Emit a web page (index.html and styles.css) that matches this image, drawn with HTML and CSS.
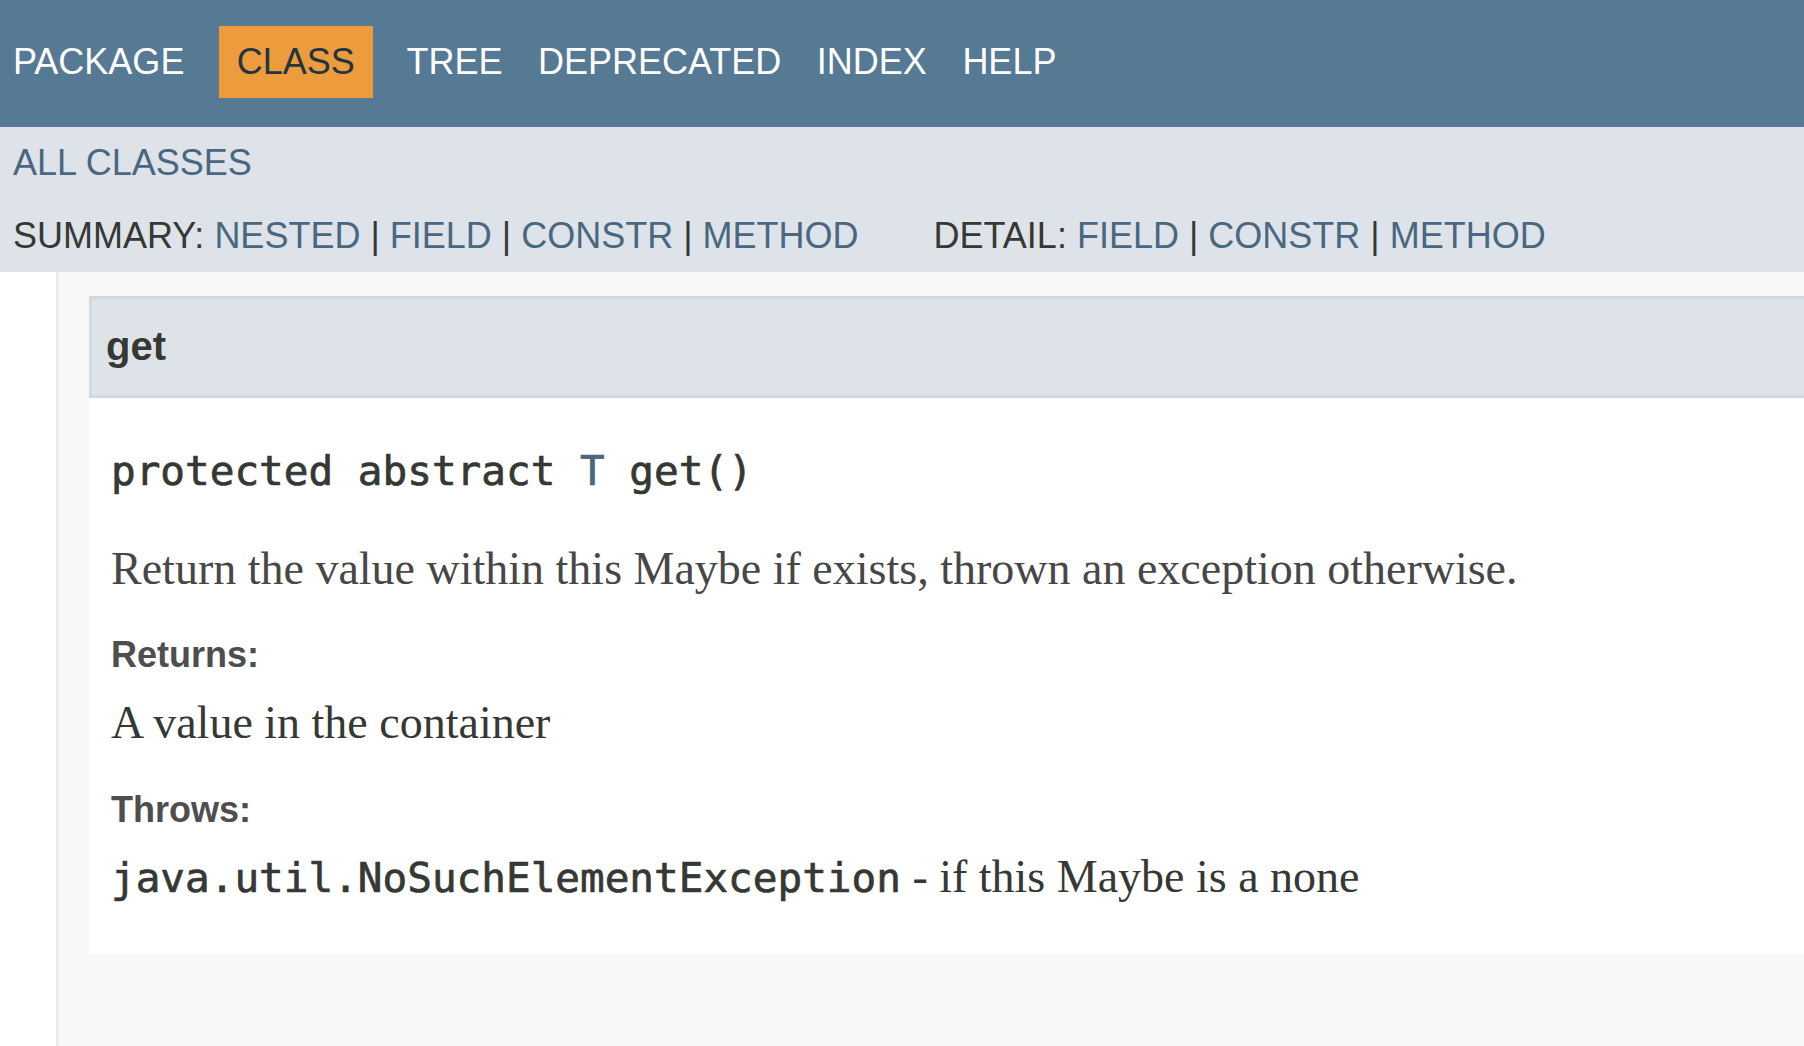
FILE: index.html
```html
<!DOCTYPE html>
<html lang="en">
<head>
<meta charset="utf-8">
<title>Maybe.get</title>
<link rel="stylesheet" href="styles.css">
</head>
<body>
<header class="topnav">
  <ul class="navlist">
    <li class="nav-item">PACKAGE</li>
    <li class="nav-item nav-active">CLASS</li>
    <li class="nav-item">TREE</li>
    <li class="nav-item">DEPRECATED</li>
    <li class="nav-item">INDEX</li>
    <li class="nav-item">HELP</li>
  </ul>
</header>
<nav class="subnav">
  <div class="subnav-row1"><a class="link" href="#">ALL CLASSES</a></div>
  <div class="subnav-row2">
    <div class="sublist">SUMMARY: <a class="link" href="#">NESTED</a> | <a class="link" href="#">FIELD</a> | <a class="link" href="#">CONSTR</a> | <a class="link" href="#">METHOD</a></div>
    <div class="sublist sublist-detail">DETAIL: <a class="link" href="#">FIELD</a> | <a class="link" href="#">CONSTR</a> | <a class="link" href="#">METHOD</a></div>
  </div>
</nav>
<main class="content">
  <section class="member">
    <h4 class="member-title">get</h4>
    <div class="member-body">
      <pre class="signature">protected abstract <a class="link" href="#">T</a> get()</pre>
      <div class="block">Return the value within this Maybe if exists, thrown an exception otherwise.</div>
      <dl class="notes">
        <dt class="note-label">Returns:</dt>
        <dd class="note-value">A value in the container</dd>
        <dt class="note-label note-label-gap">Throws:</dt>
        <dd class="note-value"><code class="code">java.util.NoSuchElementException</code> - if this Maybe is a none</dd>
      </dl>
    </div>
  </section>
</main>
</body>
</html>
```

FILE: styles.css
```css
html, body {
  margin: 0;
  padding: 0;
}

body {
  background: #ffffff;
  min-height: 100vh;
  display: flex;
  flex-direction: column;
  font-family: "Liberation Sans", Arial, sans-serif;
  color: #353833;
  overflow: hidden;
}

.link {
  color: #4a6782;
  text-decoration: none;
}

/* top navigation */
.topnav {
  background: #567994;
  padding: 26px 0 29px 13px;
}

.navlist {
  list-style: none;
  margin: 0;
  padding: 0;
  display: flex;
}

.nav-item {
  font-size: 36px;
  line-height: 72px;
  color: #ffffff;
  padding: 0 17.75px;
  white-space: nowrap;
}

.nav-item:first-child {
  padding-left: 0;
}

.nav-active {
  background: #ec9c3d;
  color: #253441;
  padding: 0 18px;
  margin: 0 16px 0 16.5px;
}

/* sub navigation */
.subnav {
  background: #dee3e9;
  padding: 6px 0 6px 13px;
  font-size: 36px;
}

.subnav-row1 {
  line-height: 60px;
}

.subnav-row2 {
  line-height: 60px;
  margin-top: 13px;
  display: flex;
  white-space: nowrap;
}

.sublist {
  color: #353833;
}

.sublist-detail {
  margin-left: 75px;
}

/* content */
.content {
  flex: 1;
  margin-left: 56px;
  border-left: 3px solid #ededed;
  background: #f8f8f8;
  padding: 24px 0 0 30px;
}

.member {
  background: #ffffff;
}

.member-title {
  margin: 0;
  background: #dee3e9;
  border: 3px solid #d0d9e0;
  border-right: none;
  padding: 0 0 2px 14px;
  font-size: 40px;
  line-height: 94px;
  font-weight: bold;
  color: #353833;
}

.member-body {
  padding: 49px 0 51px 22px;
}

.signature {
  margin: 0;
  font-family: "DejaVu Sans Mono", monospace;
  font-size: 41px;
  line-height: 48px;
  color: #353833;
  -webkit-text-stroke: 0.7px currentColor;
}

.block {
  margin-top: 48px;
  font-family: "Liberation Serif", "Times New Roman", serif;
  font-size: 46px;
  line-height: 52px;
  color: #474747;
}

.notes {
  margin: 40px 0 0 0;
}

.note-label {
  font-size: 36px;
  line-height: 40px;
  font-weight: bold;
  color: #4e4e4e;
}

.note-label-gap {
  margin-top: 41px;
}

.note-value {
  margin: 22px 0 0 0;
  font-family: "Liberation Serif", "Times New Roman", serif;
  font-size: 46px;
  line-height: 52px;
  color: #353833;
}

.note-value + .note-label-gap + .note-value {
  margin-top: 21px;
}

.code {
  font-family: "DejaVu Sans Mono", monospace;
  font-size: 41px;
  line-height: 1;
  -webkit-text-stroke: 0.7px currentColor;
}
```
